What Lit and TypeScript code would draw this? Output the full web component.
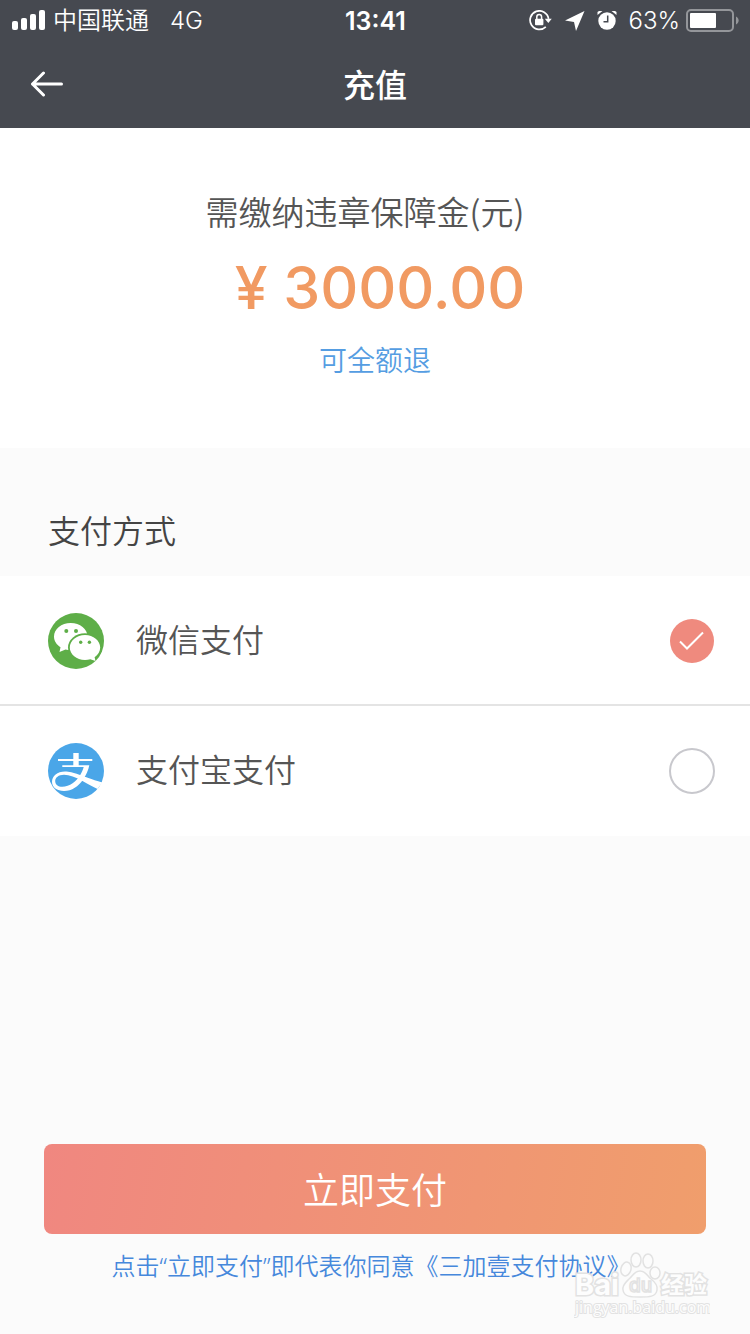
import { LitElement, html, css, svg } from "lit";
import { customElement, state } from "lit/decorators.js";

const wechatLogo = svg`
  <circle cx="28" cy="28" r="28" fill="#5eae48"/>
  <path fill="#fff" d="M22.700 10C13.400 10 6 16 6 23.500c0 4.500 2.600 8.200 6.500 10.700L11.500 39l6-2.600c1.700.4 3.400.6 5.200.6 9.300 0 16.800-6 16.800-13.500S32 10 22.700 10z"/>
  <circle cx="18.300" cy="18" r="2" fill="#5eae48"/>
  <circle cx="28" cy="18" r="2" fill="#5eae48"/>
  <ellipse cx="37" cy="34.500" rx="17" ry="14.200" fill="#5eae48"/>
  <path fill="#fff" d="M37 22c-8.400 0-15.200 5.600-15.200 12.500S28.600 47 37 47c1.900 0 3.700-.3 5.300-.8l5.200 1.800-.9-3.800c3.400-2.300 5.600-5.800 5.600-9.700C52.200 27.600 45.400 22 37 22z"/>
  <circle cx="32.700" cy="29.200" r="1.700" fill="#5eae48"/>
  <circle cx="41.400" cy="29.200" r="1.700" fill="#5eae48"/>`;

const alipayLogo = svg`
  <circle cx="28" cy="28" r="28" fill="#4aa6e8"/>
  <path fill="#fff" d="M25.300 10h5.400v6h13.600v2H30.700v4.300h10.600C40.400 27 38 32.500 34.800 37 30.500 43.200 24 48 16 48 9 48 4 44.500 4 38.800 4 33 9.300 28.500 17 28.500c8.500 0 15.500 4.500 37.300 11L49.500 46C41 42.500 27 31.800 16 31.800c-5.500 0-8.800 3-8.800 6.200 0 3.600 3 5.800 7 5.800 7.500 0 14.300-5.300 18-11.800 1.600-2.800 2.800-5.500 3.500-8H14.300v-1.700h11V18H10v-2h15.300z"/>`;

interface Method {
  id: string;
  name: string;
  logo: unknown;
}

const METHODS: Method[] = [
  { id: "wechat", name: "微信支付", logo: wechatLogo },
  { id: "alipay", name: "支付宝支付", logo: alipayLogo },
];

@customElement("status-bar")
export class StatusBar extends LitElement {
  static styles = css`
    :host {
      display: grid;
      grid-template-columns: 1fr auto 1fr;
      align-items: center;
      box-sizing: border-box;
      height: 40px;
      padding: 2px 11px 0 12px;
      font-size: 24px;
      line-height: 32px;
    }
    svg { display: block; }
    .side { display: flex; align-items: center; }
    .carrier { margin: 0 21px 0 7px; font-weight: 350; }
    .network { font-weight: 300; }
    .time { font-size: 25px; font-weight: 600; }
    .end { justify-content: flex-end; }
    .signal { margin-bottom: 2px; }
    .rotation { margin-right: 13px; }
    .arrow { margin-right: 12px; }
    .alarm { margin-right: 12px; }
    .percent { margin-right: 6px; font-weight: 300; }
  `;

  render() {
    return html`
      <div class="side">
        <svg class="signal" width="34" height="20" viewBox="0 0 34 20" fill="#fff" aria-hidden="true">
          <rect y="11" width="6" height="9" rx="2"/>
          <rect x="9" y="8" width="6" height="12" rx="2"/>
          <rect x="18" y="4" width="6" height="16" rx="2"/>
          <rect x="27" width="6" height="20" rx="2"/>
        </svg>
        <span class="carrier">中国联通</span>
        <span class="network">4G</span>
      </div>
      <span class="time">13:41</span>
      <div class="side end">
        <svg class="rotation" width="23" height="22" viewBox="0 0 23 22" aria-hidden="true">
          <path d="M16.800 16.900A9.300 9.300 0 1 1 19.600 8.800" fill="none" stroke="#fff" stroke-width="1.700"/>
          <path d="M15.800 8.800h7l-3.500 4.300z" fill="#fff"/>
          <rect x="6" y="8.800" width="8.400" height="6.500" rx="1" fill="#fff"/>
          <path d="M7.800 9.500V7a2.400 2.400 0 0 1 4.800 0V9.500" fill="none" stroke="#fff" stroke-width="1.500"/>
        </svg>
        <svg class="arrow" width="20" height="20" viewBox="0 0 20 20" fill="#fff" aria-hidden="true">
          <path d="M19.500 0 11 20 9 11 0 9.500z"/>
        </svg>
        <svg class="alarm" width="20" height="20" viewBox="0 0 20 20" aria-hidden="true">
          <circle cx="10" cy="10" r="8.700" fill="#fff"/>
          <path d="M.5 4V1L2 .1h3.500zM19.500 4V1L18 .1h-3.500z" fill="#fff"/>
          <path d="M10.700 4.500v6.200H6.500" fill="none" stroke="#464950" stroke-width="1.500"/>
        </svg>
        <span class="percent">63%</span>
        <svg width="53" height="24" viewBox="0 0 53 24" aria-hidden="true">
          <rect x="1" y="1" width="46" height="21" rx="4" fill="none" stroke="#94969a" stroke-width="2"/>
          <rect x="4" y="4" width="26" height="15" rx="1" fill="#fff"/>
          <path d="M50 7.500c3.500 1.500 3.500 6.500 0 8z" fill="#94969a"/>
        </svg>
      </div>
    `;
  }
}

@customElement("pay-option")
export class PayOption extends LitElement {
  static properties = {
    method: { attribute: false },
    checked: { type: Boolean },
  };
  declare method: Method;
  declare checked: boolean;

  static styles = css`
    :host { display: block; }
    .row {
      display: flex;
      align-items: center;
      height: 130px;
      padding: 0 35px 0 48px;
      box-sizing: border-box;
      font-size: 32px;
      line-height: 48px;
      color: #555;
      cursor: pointer;
    }
    .logo { display: block; margin-right: 32px; }
    .name { flex: 1; }
    .mark { display: grid; place-items: center; }
    .radio, .tick { grid-area: 1 / 1; }
    .radio {
      appearance: none;
      box-sizing: border-box;
      width: 46px;
      height: 46px;
      margin: 0;
      border: 2px solid #c8c8cd;
      border-radius: 50%;
      background: #fff;
    }
    .radio:checked {
      width: 44px;
      height: 44px;
      margin: 1px;
      border: 0;
      background: #ef8a7e;
    }
    .tick { pointer-events: none; }
  `;

  render() {
    return html`
      <label class="row">
        <svg class="logo" width="56" height="56" viewBox="0 0 56 56" aria-hidden="true">${this.method.logo}</svg>
        <span class="name">${this.method.name}</span>
        <span class="mark">
          <input class="radio" type="radio" name="method" value=${this.method.id}
            .checked=${this.checked}
            @change=${() => this.dispatchEvent(new CustomEvent("pick", { detail: this.method.id }))}>
          ${this.checked
            ? html`<svg class="tick" width="26" height="20" viewBox="0 0 26 20" aria-hidden="true">
                <path d="M1 10.500 8 17.500 24 1.500" fill="none" stroke="#fff" stroke-width="2"/>
              </svg>`
            : null}
        </span>
      </label>
    `;
  }
}

@customElement("app-root")
export class AppRoot extends LitElement {
  @state() private selected = "wechat";

  static styles = css`
    :host {
      position: relative;
      display: flex;
      flex-direction: column;
      min-height: 100vh;
      background: #fbfbfb;
      font-family: Inter, "Noto Sans CJK SC", sans-serif;
      font-weight: 350;
      color: #444;
    }
    .top { background: #464950; color: #fff; }
    .nav {
      display: grid;
      grid-template-columns: 1fr auto 1fr;
      align-items: center;
      height: 88px;
      padding: 0 30px;
    }
    .back {
      justify-self: start;
      padding: 0;
      border: 0;
      background: none;
      cursor: pointer;
    }
    .back svg { display: block; }
    .title { margin: 0; padding-top: 4px; font-size: 32px; line-height: 48px; font-weight: 500; }
    .summary {
      box-sizing: border-box;
      min-height: 320px;
      padding-top: 59px;
      background: #fff;
      text-align: center;
    }
    .summary p { margin: 0; }
    .caption {
      padding-right: 20px;
      font-family: "Noto Sans CJK SC", sans-serif;
      font-size: 33px;
      line-height: 48px;
      color: #555;
    }
    .amount {
      padding-left: 10px;
      font-size: 59px;
      line-height: 106px;
      font-weight: 500;
      color: #f19a62;
    }
    .refund { font-size: 28px; line-height: 40px; color: #559de2; }
    .methods { margin: 0; padding: 0; border: 0; min-width: 0; }
    .heading {
      box-sizing: border-box;
      width: 100%;
      padding: 60px 48px 20px;
      font-size: 32px;
      line-height: 48px;
    }
    .list { background: #fff; }
    .list pay-option:not(:last-child) { box-shadow: inset 0 -2px #e4e4e4; }
    .footer { margin-top: auto; padding: 40px 44px 50px; text-align: center; }
    .pay {
      display: block;
      width: 100%;
      height: 90px;
      padding: 0 0 2px;
      border: 0;
      border-radius: 8px;
      background: linear-gradient(100deg, #f08780, #f09e6c);
      color: #fff;
      font-family: inherit;
      font-size: 36px;
      font-weight: 350;
      cursor: pointer;
    }
    .terms {
      display: block;
      margin-top: 14px;
      padding-right: 8px;
      font-family: "Noto Sans", "Noto Sans CJK SC", sans-serif;
      font-size: 24px;
      line-height: 36px;
      color: #4688dc;
      text-decoration: none;
    }
    .watermark {
      position: absolute;
      right: 40px;
      bottom: 14px;
      display: block;
      pointer-events: none;
    }
  `;

  render() {
    return html`
      <header class="top">
        <status-bar></status-bar>
        <div class="nav">
          <button class="back" aria-label="返回">
            <svg width="34" height="26" viewBox="0 0 34 26" fill="none" stroke="#fff" stroke-width="3" stroke-linecap="round" stroke-linejoin="round">
              <path d="M13.500 2 2.500 13l11 11M2.500 13h29"/>
            </svg>
          </button>
          <h1 class="title">充值</h1>
        </div>
      </header>
      <section class="summary">
        <p class="caption">需缴纳违章保障金(元)</p>
        <p class="amount">¥ 3000.00</p>
        <p class="refund">可全额退</p>
      </section>
      <fieldset class="methods">
        <legend class="heading">支付方式</legend>
        <div class="list">
          ${METHODS.map(
            (m) => html`<pay-option .method=${m} .checked=${this.selected === m.id}
              @pick=${(e: CustomEvent) => (this.selected = e.detail)}></pay-option>`
          )}
        </div>
      </fieldset>
      <footer class="footer">
        <button class="pay">立即支付</button>
        <a class="terms" href="#terms">点击“立即支付”即代表你同意《三加壹支付协议》</a>
      </footer>
      <svg class="watermark" width="136" height="68" viewBox="0 0 136 68" fill="#fdfdfd" stroke="#e2e2e2" stroke-width="1.500" font-family="Inter, 'Noto Sans CJK SC', sans-serif" aria-hidden="true">
        <g fill-opacity=".6">
          <ellipse cx="52" cy="17" rx="5" ry="7" transform="rotate(15 52 17)"/>
          <ellipse cx="62" cy="8" rx="5" ry="7"/>
          <ellipse cx="74" cy="9" rx="5" ry="7"/>
          <ellipse cx="81" cy="21" rx="5" ry="6"/>
        </g>
        <path d="M66 19c6 0 7 5 11 8 4 3 7 6 6 11-1 7-8 7-17 7s-16 0-17-7c-1-5 3-8 6-11 4-3 5-8 11-8z"/>
        <text x="1" y="43" font-size="29" font-weight="700" paint-order="stroke" stroke-width="3">Bai</text>
        <text x="55" y="40" font-size="19" font-weight="500">du</text>
        <text x="87" y="41" font-size="23" font-weight="700" paint-order="stroke" stroke-width="3">经验</text>
        <text x="1" y="61" font-size="16" font-weight="500" paint-order="stroke" stroke-width="2" font-family="'Open Sans', sans-serif">jingyan.baidu.com</text>
      </svg>
    `;
  }
}
